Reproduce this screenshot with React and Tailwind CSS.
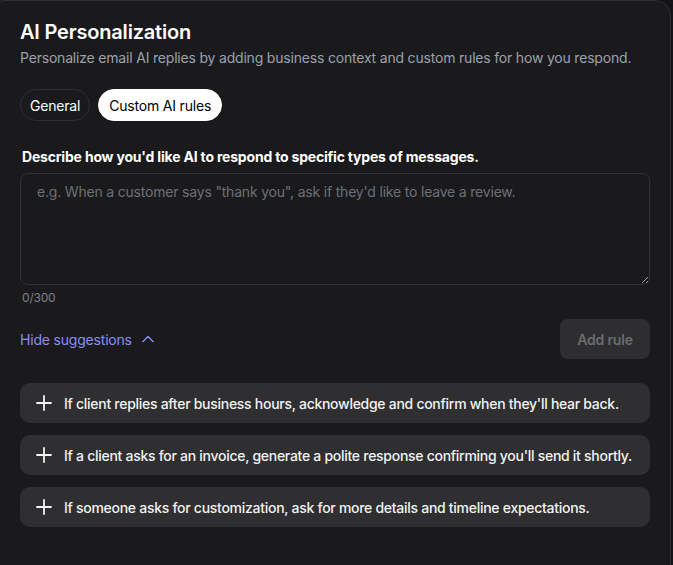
import { useState } from "react";

const SUGGESTIONS = [
  "If client replies after business hours, acknowledge and confirm when they'll hear back.",
  "If a client asks for an invoice, generate a polite response confirming you'll send it shortly.",
  "If someone asks for customization, ask for more details and timeline expectations.",
];

const PlusIcon = () => (
  <svg width="16" height="16" viewBox="0 0 16 16" fill="none" stroke="currentColor" strokeWidth="1.8" strokeLinecap="round">
    <path d="M8 1v14M1 8h14" />
  </svg>
);

const ChevronUp = () => (
  <svg width="12" height="8" viewBox="0 0 12 8" fill="none" stroke="currentColor" strokeWidth="1.5" strokeLinecap="round" strokeLinejoin="round">
    <path d="M1 6.5 6 1.5l5 5" />
  </svg>
);

const App = () => {
  const [tab, setTab] = useState("custom");
  const [rule, setRule] = useState("");

  return (
    <div className="min-h-[565px] bg-[#141416] font-['Inter',sans-serif] tracking-[-0.012em]">
      <div className="ml-[-12px] mr-[2px] min-h-[575px] rounded-tr-2xl rounded-tl-2xl border border-[#2f2f32] bg-[#1a1a1c] pb-10 pl-[31px] pr-[20px] pt-[19px]">
        <h1 className="text-[20px] font-semibold leading-[24px] text-white">AI Personalization</h1>
        <p className="mt-[4px] text-[14px] leading-[20px] text-[#9aa1ab]">
          Personalize email AI replies by adding business context and custom rules for how you respond.
        </p>

        <div className="mt-[21px] flex gap-2">
          <button
            type="button"
            onClick={() => setTab("general")}
            className={`h-[32px] rounded-full border px-[9px] text-[14px] ${
              tab === "general" ? "border-white bg-white text-black" : "border-[#2e2e31] text-white"
            }`}
          >
            General
          </button>
          <button
            type="button"
            onClick={() => setTab("custom")}
            className={`h-[32px] rounded-full border px-[10px] text-[14px] ${
              tab === "custom" ? "border-white bg-white text-black" : "border-[#2e2e31] text-white"
            }`}
          >
            Custom AI rules
          </button>
        </div>

        <p className="mt-[26px] pl-[2px] text-[14px] font-bold leading-[20px] text-white">
          Describe how you'd like AI to respond to specific types of messages.
        </p>
        <textarea
          value={rule}
          maxLength={300}
          onChange={(e) => setRule(e.target.value)}
          placeholder={'e.g. When a customer says "thank you", ask if they\'d like to leave a review.'}
          className="mt-[6px] block h-[112px] w-full rounded-lg border border-[#333336] bg-transparent px-[16px] py-[8px] text-[14px] leading-[20px] text-white outline-none placeholder:text-[#6c7079]"
        />
        <p className="mt-[3px] pl-[2px] text-[12px] leading-[20px] text-[#7c818a]">{rule.length}/300</p>

        <div className="mt-[11px] flex items-center justify-between">
          <button type="button" className="flex items-center gap-[10px] text-[14px] text-[#8a8cf7]">
            Hide suggestions
            <ChevronUp />
          </button>
          <button
            type="button"
            disabled
            className="h-[40px] w-[90px] rounded-lg bg-[#2e2e30] text-[14px] font-semibold text-[#6b6b6e]"
          >
            Add rule
          </button>
        </div>

        <div className="mt-[24px] flex flex-col gap-3">
          {SUGGESTIONS.map((text) => (
            <button
              type="button"
              key={text}
              onClick={() => setRule(text)}
              className="flex h-[40px] items-center gap-[12px] rounded-[10px] bg-[#2f2f31] pl-[16px] text-left text-[14px] font-medium tracking-[-0.02em] text-[#f2f2f2]"
            >
              <PlusIcon />
              <span>{text}</span>
            </button>
          ))}
        </div>
      </div>
    </div>
  );
};

export default App;
